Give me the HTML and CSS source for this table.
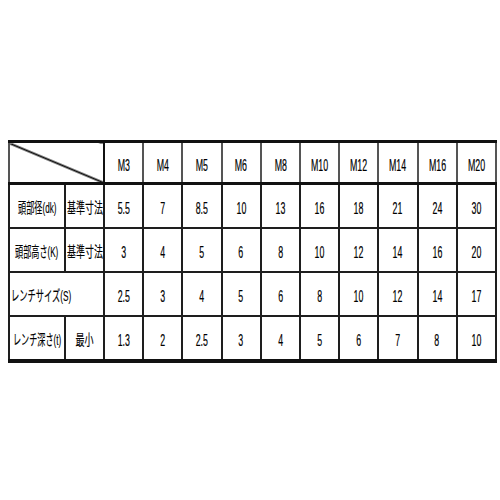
FILE: index.html
```html
<!DOCTYPE html>
<html lang="ja">
<head>
<meta charset="utf-8">
<title>寸法表</title>
<link rel="stylesheet" href="styles.css">
</head>
<body>
<div class="page">
  <table class="spec">
    <colgroup>
      <col class="c-l1"><col class="c-l2">
      <col class="c-v"><col class="c-v"><col class="c-v"><col class="c-v"><col class="c-v">
      <col class="c-v"><col class="c-v"><col class="c-v"><col class="c-v"><col class="c-v">
    </colgroup>
    <thead>
      <tr class="head">
        <th colspan="2" class="diag"><div class="cell"></div></th>
        <th><div class="cell"><span class="t">M3</span></div></th>
        <th><div class="cell"><span class="t">M4</span></div></th>
        <th><div class="cell"><span class="t">M5</span></div></th>
        <th><div class="cell"><span class="t">M6</span></div></th>
        <th><div class="cell"><span class="t">M8</span></div></th>
        <th><div class="cell"><span class="t">M10</span></div></th>
        <th><div class="cell"><span class="t">M12</span></div></th>
        <th><div class="cell"><span class="t">M14</span></div></th>
        <th><div class="cell"><span class="t">M16</span></div></th>
        <th><div class="cell"><span class="t">M20</span></div></th>
      </tr>
    </thead>
    <tbody>
      <tr>
        <td><div class="cell"><span class="t jp name">頭部径(dk)</span></div></td>
        <td><div class="cell"><span class="t jp">基準寸法</span></div></td>
        <td><div class="cell"><span class="t">5.5</span></div></td>
        <td><div class="cell"><span class="t">7</span></div></td>
        <td><div class="cell"><span class="t">8.5</span></div></td>
        <td><div class="cell"><span class="t">10</span></div></td>
        <td><div class="cell"><span class="t">13</span></div></td>
        <td><div class="cell"><span class="t">16</span></div></td>
        <td><div class="cell"><span class="t">18</span></div></td>
        <td><div class="cell"><span class="t">21</span></div></td>
        <td><div class="cell"><span class="t">24</span></div></td>
        <td><div class="cell"><span class="t">30</span></div></td>
      </tr>
      <tr>
        <td><div class="cell"><span class="t jp name">頭部高さ(K)</span></div></td>
        <td><div class="cell"><span class="t jp">基準寸法</span></div></td>
        <td><div class="cell"><span class="t">3</span></div></td>
        <td><div class="cell"><span class="t">4</span></div></td>
        <td><div class="cell"><span class="t">5</span></div></td>
        <td><div class="cell"><span class="t">6</span></div></td>
        <td><div class="cell"><span class="t">8</span></div></td>
        <td><div class="cell"><span class="t">10</span></div></td>
        <td><div class="cell"><span class="t">12</span></div></td>
        <td><div class="cell"><span class="t">14</span></div></td>
        <td><div class="cell"><span class="t">16</span></div></td>
        <td><div class="cell"><span class="t">20</span></div></td>
      </tr>
      <tr>
        <td colspan="2"><div class="cell left"><span class="t jp name">レンチサイズ(S)</span></div></td>
        <td><div class="cell"><span class="t">2.5</span></div></td>
        <td><div class="cell"><span class="t">3</span></div></td>
        <td><div class="cell"><span class="t">4</span></div></td>
        <td><div class="cell"><span class="t">5</span></div></td>
        <td><div class="cell"><span class="t">6</span></div></td>
        <td><div class="cell"><span class="t">8</span></div></td>
        <td><div class="cell"><span class="t">10</span></div></td>
        <td><div class="cell"><span class="t">12</span></div></td>
        <td><div class="cell"><span class="t">14</span></div></td>
        <td><div class="cell"><span class="t">17</span></div></td>
      </tr>
      <tr>
        <td><div class="cell"><span class="t jp name">レンチ深さ(t)</span></div></td>
        <td><div class="cell"><span class="t jp">最小</span></div></td>
        <td><div class="cell"><span class="t">1.3</span></div></td>
        <td><div class="cell"><span class="t">2</span></div></td>
        <td><div class="cell"><span class="t">2.5</span></div></td>
        <td><div class="cell"><span class="t">3</span></div></td>
        <td><div class="cell"><span class="t">4</span></div></td>
        <td><div class="cell"><span class="t">5</span></div></td>
        <td><div class="cell"><span class="t">6</span></div></td>
        <td><div class="cell"><span class="t">7</span></div></td>
        <td><div class="cell"><span class="t">8</span></div></td>
        <td><div class="cell"><span class="t">10</span></div></td>
      </tr>
    </tbody>
  </table>
</div>
</body>
</html>
```

FILE: styles.css
```css
html, body {
  margin: 0;
  padding: 0;
  background: #ffffff;
}

.page {
  padding: 140px 5px 0 8px;
}

.spec {
  border-collapse: collapse;
  table-layout: fixed;
  width: 487px;
  font-family: "Liberation Sans", "Noto Sans CJK JP", sans-serif;
  font-size: 17px;
  color: #000;
  border-top: 3px solid #111;
  border-bottom: 4px solid #111;
  border-left: 2px solid #111;
  border-right: 2px solid #111;
}

.c-l1 { width: 56px; }
.c-l2 { width: 39px; }
.c-v { width: 39.2px; }

.spec th,
.spec td {
  border: 2px solid #1e1e1e;
  padding: 0;
  font-weight: normal;
  white-space: nowrap;
  line-height: 1;
}

.spec .head th {
  border-bottom: 3px solid #111;
  border-top: 3px solid #111;
  border-left-color: #555;
  border-right-color: #555;
}

.cell {
  display: flex;
  align-items: center;
  justify-content: center;
  height: 42px;
  padding-top: 5px;
  box-sizing: border-box;
}

.head .cell {
  height: 39px;
}

.cell.left {
  justify-content: flex-start;
  padding-left: 1px;
}

.spec .head th.diag {
  border-right-color: #111;
  background: linear-gradient(to top right,
    transparent calc(50% - 1.4px),
    #111 calc(50% - 0.5px),
    #111 calc(50% + 0.5px),
    transparent calc(50% + 1.4px));
}

.t {
  display: inline-block;
  flex: none;
  transform: scaleX(0.52);
  transform-origin: center;
  -webkit-text-stroke: 0.2px #000;
}

.t.jp {
  font-size: 14.5px;
  transform: scaleX(0.62);
  -webkit-text-stroke: 0.15px #000;
}

.t.jp.name {
  transform: scaleX(0.56);
}

.left .t.jp.name {
  transform: scaleX(0.57);
  transform-origin: left center;
}
```
